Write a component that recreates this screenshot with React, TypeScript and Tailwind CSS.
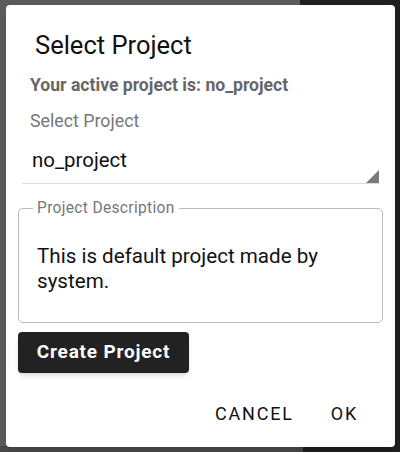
import { FC } from "react";

const App: FC = () => {
  return (
    <div
      className="relative w-[400px] h-[452px] overflow-hidden bg-[#5b5b5b]"
      style={{ fontFamily: "Roboto, 'Liberation Sans', sans-serif" }}
    >
      {/* backdrop bits behind the dialog */}
      <div className="absolute right-0 top-0 w-[100px] h-full bg-[#1f1f1f]" />
      <div className="absolute left-0 bottom-0 w-[303px] h-[6px] bg-[#4a4a4a]" />

      <div className="absolute left-[6px] top-[5px] w-[389px] h-[442px] bg-white rounded-[4px] shadow-lg flex flex-col">
        <h2 className="pl-[29px] pt-[25px] text-[25.5px] leading-[30px] text-[#111]">
          Select Project
        </h2>
        <div className="px-[24px] pt-[15px] text-[17.6px] font-bold text-[#666] leading-5">
          Your active project is: no_project
        </div>

        <div className="px-[16px] pt-[16px]">
          <div className="pl-[8px] text-[17.8px] text-[#777] leading-5">Select Project</div>
          <div className="relative mt-[17px] border-b border-[#ddd] h-[36px]">
            <div className="pl-[10px] text-[20.4px] leading-[24px] text-[#111]">no_project</div>
            <svg
              className="absolute right-[0px] bottom-[0px]"
              width="13"
              height="13"
              viewBox="0 0 13 13"
            >
              <polygon points="13,0 13,13 0,13" fill="#7a7a7a" />
            </svg>
          </div>
        </div>

        <div className="px-[12px] pt-[24px]">
          <fieldset className="border border-[#bbb] rounded-[5px] h-[123px] px-[18px] -mt-[8px]">
            <legend className="px-[4px] -ml-[4px] text-[15.6px] text-[#777] tracking-[0.3px] leading-[16px]">
              Project Description
            </legend>
            <p className="pt-[28px] text-[20.6px] leading-[25px] text-[#111]">
              This is default project made by system.
            </p>
          </fieldset>
        </div>

        <div className="px-[12px] pt-[9px]">
          <button className="h-[41px] w-[171px] rounded-[4px] bg-[#222] text-white font-bold text-[19px] tracking-[0.8px] shadow-md">
            Create Project
          </button>
        </div>

        <div className="flex justify-end items-center gap-[37px] pr-[37px] pt-[27px]">
          <span className="text-[18px] tracking-[1.8px] text-[#111]">CANCEL</span>
          <span className="text-[18px] tracking-[1.8px] text-[#111]">OK</span>
        </div>
      </div>
    </div>
  );
};

export default App;
